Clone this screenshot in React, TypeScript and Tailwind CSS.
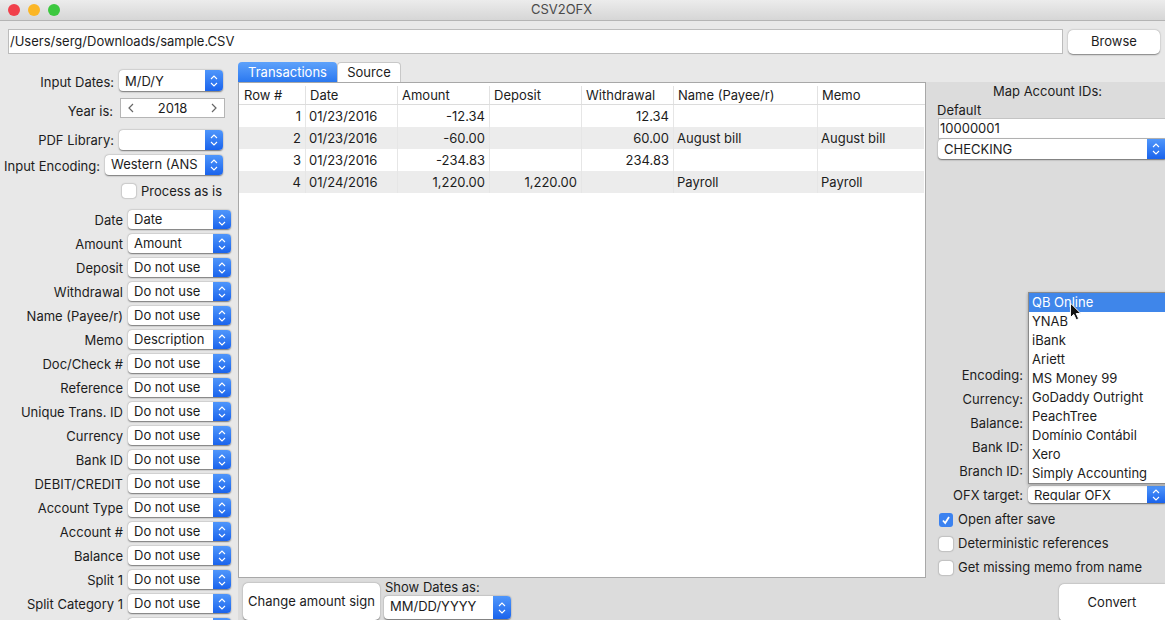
import type { ReactNode } from "react";

const FONT = "font-['Inter','Liberation_Sans',sans-serif]";

function Arrows() {
  return (
    <svg width="8" height="14" viewBox="0 0 8 14" fill="none" stroke="white" strokeWidth="1.1">
      <path d="M1 5 L4 2 L7 5" />
      <path d="M1 9 L4 12 L7 9" />
    </svg>
  );
}

function Select({ value, className }: { value: string; className: string }) {
  return (
    <div className={`flex shrink-0 rounded-[4px] bg-white shadow-[0_0.5px_1.5px_rgba(0,0,0,0.5)] overflow-hidden ${className}`}>
      <div className="min-w-0 flex-1 pl-[6px] h-[15px] mt-[1px] overflow-hidden leading-[17px] whitespace-nowrap">{value}</div>
      <div className="flex w-[18px] shrink-0 items-center justify-center bg-gradient-to-b from-[#4f96fb] to-[#1a63ec]">
        <Arrows />
      </div>
    </div>
  );
}

function Checkbox({ checked }: { checked?: boolean }) {
  return (
    <div className={`flex h-[14px] w-[14px] shrink-0 items-center justify-center rounded-[3px] ${checked ? "bg-[#3b82f0]" : "bg-white shadow-[0_0_1.5px_rgba(0,0,0,0.6)]"}`}>
      {checked && (
        <svg width="10" height="10" viewBox="0 0 10 10" fill="none" stroke="white" strokeWidth="1.8">
          <path d="M2 5.5 L4.2 8 L8 2" />
        </svg>
      )}
    </div>
  );
}

function Button({ children, className }: { children: ReactNode; className: string }) {
  return (
    <div className={`flex shrink-0 items-center justify-center rounded-[5px] bg-white shadow-[0_0.5px_1.5px_rgba(0,0,0,0.45)] ${className}`}>
      {children}
    </div>
  );
}

const mapRows = [
  ["Date", "Date"],
  ["Amount", "Amount"],
  ["Deposit", "Do not use"],
  ["Withdrawal", "Do not use"],
  ["Name (Payee/r)", "Do not use"],
  ["Memo", "Description"],
  ["Doc/Check #", "Do not use"],
  ["Reference", "Do not use"],
  ["Unique Trans. ID", "Do not use"],
  ["Currency", "Do not use"],
  ["Bank ID", "Do not use"],
  ["DEBIT/CREDIT", "Do not use"],
  ["Account Type", "Do not use"],
  ["Account #", "Do not use"],
  ["Balance", "Do not use"],
  ["Split 1", "Do not use"],
  ["Split Category 1", "Do not use"],
  ["", ""],
];

const columns = ["Row #", "Date", "Amount", "Deposit", "Withdrawal", "Name (Payee/r)", "Memo"];
const GRID = "grid grid-cols-[66px_92px_92px_92px_92px_144px_104px]";

const rows = [
  ["1", "01/23/2016", "-12.34", "", "12.34", "", ""],
  ["2", "01/23/2016", "-60.00", "", "60.00", "August bill", "August bill"],
  ["3", "01/23/2016", "-234.83", "", "234.83", "", ""],
  ["4", "01/24/2016", "1,220.00", "1,220.00", "", "Payroll", "Payroll"],
];

const menu = ["QB Online", "YNAB", "iBank", "Ariett", "MS Money 99", "GoDaddy Outright", "PeachTree", "Domínio Contábil", "Xero", "Simply Accounting"];

function TopLabel({ children, className }: { children: ReactNode; className?: string }) {
  return <div className={`text-right whitespace-nowrap ${className ?? ""}`}>{children}</div>;
}

function LeftColumn() {
  return (
    <div className="w-[238px] shrink-0 overflow-hidden">
      <div className="mt-[9px] flex h-[21px] items-center justify-end gap-[5px] pr-[15px]">
        <TopLabel className="pt-[4px]">Input Dates:</TopLabel>
        <Select value="M/D/Y" className="h-[21px] w-[104px] [&>div:first-child]:mt-[3px]" />
      </div>
      <div className="mt-[7px] flex h-[20px] items-center justify-end gap-[7px] pr-[13px]">
        <TopLabel className="pt-[7px]">Year is:</TopLabel>
        <div className="flex h-[20px] w-[105px] items-center justify-between border border-[#b5b5b5] bg-white px-[7px]">
          <svg width="6" height="10" viewBox="0 0 6 10" fill="none" stroke="#666" strokeWidth="1.2"><path d="M5 1 L1 5 L5 9" /></svg>
          <span className="pt-[2px]">2018</span>
          <svg width="6" height="10" viewBox="0 0 6 10" fill="none" stroke="#666" strokeWidth="1.2"><path d="M1 1 L5 5 L1 9" /></svg>
        </div>
      </div>
      <div className="mt-[12px] flex h-[20px] items-center justify-end gap-[5px] pr-[15px]">
        <TopLabel className="pt-[2px]">PDF Library:</TopLabel>
        <Select value="" className="h-[20px] w-[104px]" />
      </div>
      <div className="mt-[5px] flex h-[20px] items-center justify-end gap-[5px] pr-[15px]">
        <TopLabel className="pt-[3px]">Input Encoding:</TopLabel>
        <Select value="Western (ANS" className="h-[20px] w-[118px]" />
      </div>
      <div className="mt-[8px] flex h-[16px] items-center pl-[122px] gap-[5px]">
        <Checkbox />
        <span className="whitespace-nowrap pt-[1px]">Process as is</span>
      </div>
      <div className="mt-[11px] flex flex-col gap-[5px]">
        {mapRows.map(([label, value], i) => (
          <div key={i} className="flex h-[19px] items-center justify-end gap-[5px] pr-[7px]">
            <div className="pt-[2px] text-right whitespace-nowrap">{label}</div>
            <Select value={value} className="h-[19px] w-[103px]" />
          </div>
        ))}
      </div>
    </div>
  );
}

function Table() {
  return (
    <div className="h-[496px] border border-[#a8a8a8] bg-white">
      <div className={`${GRID} h-[22px] items-center border-b border-[#dcdcdc]`}>
        {columns.map((c, i) => (
          <div key={c} className={`mt-[2px] h-[18px] leading-[18px] whitespace-nowrap overflow-hidden ${i > 0 ? "border-l border-[#e2e2e2] pl-[4px]" : "pl-[5px]"}`}>{c}</div>
        ))}
      </div>
      {rows.map((r, i) => (
        <div key={i} className={`${GRID} h-[22px] w-[685px] ${i % 2 === 1 ? "bg-[#ececec]" : ""}`}>
          {r.map((cell, j) => (
            <div key={j} className={`h-[22px] leading-[22px] whitespace-nowrap ${j !== 0 ? "border-l border-[#e6e6e6]" : ""} ${j === 0 || (j >= 2 && j <= 4) ? "pr-[4px] text-right" : "pl-[3px]"}`}>{cell}</div>
          ))}
        </div>
      ))}
    </div>
  );
}

function MiddleColumn() {
  return (
    <div className="flex w-[688px] shrink-0 flex-col">
      <div className="mt-[1px] flex h-[20px] items-end">
        <div className="flex h-[20px] w-[99px] items-center justify-center rounded-t-[4px] bg-gradient-to-b from-[#5ea2fb] to-[#2a78f0] pt-[2px] text-white">Transactions</div>
        <div className="flex h-[20px] w-[64px] items-center justify-center rounded-t-[4px] border border-b-0 border-[#c8c8c8] bg-white pt-[1px]">Source</div>
      </div>
      <Table />
      <div className="flex h-[42px] bg-[#dcdcdc]">
        <Button className="ml-[5px] mt-[5px] h-[37px] w-[137px]">Change amount sign</Button>
        <div className="ml-[4px] w-[127px]">
          <div className="mt-[2px] h-[15px] pl-[1px] leading-[15px] whitespace-nowrap">Show Dates as:</div>
          <Select value="MM/DD/YYYY" className="mt-[1px] h-[23px] w-[127px] [&>div:first-child]:mt-[2px] [&>div:first-child]:h-[18px]" />
        </div>
      </div>
    </div>
  );
}

function RightColumn() {
  const labels = ["Encoding:", "Currency:", "Balance:", "Bank ID:", "Branch ID:"];
  return (
    <div className="relative w-[239px] shrink-0 overflow-hidden">
      <div className="h-[21px]" />
      <div className="h-[538px] bg-[#dcdcdc] pt-[1px]">
        <div className="pl-[4px] text-center leading-[17px]">Map Account IDs:</div>
        <div className="ml-[11px] mt-[3px] leading-[15px]">Default</div>
        <div className="ml-[12px] h-[21px] w-[240px] border border-[#c4c4c4] bg-white pl-[1px] leading-[19px]">10000001</div>
        <Select value="CHECKING" className="ml-[12px] h-[20px] w-[227px] rounded-r-none [&>div:first-child]:mt-[2px]" />

        <div className="mt-[207px] flex flex-col gap-[5px]">
          {labels.map((l) => (
            <div key={l} className="h-[19px] w-[97px] text-right leading-[19px]">{l}</div>
          ))}
          <div className="flex h-[19px] items-start gap-[5px]">
            <div className="w-[97px] shrink-0 text-right leading-[19px]">OFX target:</div>
            <Select value="Regular OFX" className="h-[17px] w-[137px] rounded-r-none [&>div:first-child]:h-[14px]" />
          </div>
        </div>

        <div className="ml-[13px] mt-[8px] flex flex-col gap-[10px]">
          <div className="flex h-[14px] items-center gap-[5px]"><Checkbox checked /><span className="whitespace-nowrap">Open after save</span></div>
          <div className="flex h-[14px] items-center gap-[5px]"><Checkbox /><span className="whitespace-nowrap">Deterministic references</span></div>
          <div className="flex h-[14px] items-center gap-[5px]"><Checkbox /><span className="whitespace-nowrap">Get missing memo from name</span></div>
        </div>
        <Button className="ml-[133px] mt-[9px] h-[37px] w-[106px] rounded-r-none">Convert</Button>
      </div>

      {/* open popup over the OFX target field */}
      <div className="absolute left-[102px] top-[231px] w-[140px] border border-[#8a8a8a] bg-white shadow-[0_1px_3px_rgba(0,0,0,0.3)]">
        {menu.map((m, i) => (
          <div key={m} className={`h-[19px] pl-[3px] leading-[19px] whitespace-nowrap ${i === 0 ? "bg-[#3f86ea] text-white" : ""}`}>{m}</div>
        ))}
      </div>
      <svg className="absolute left-[143px] top-[241px]" width="14" height="20" viewBox="0 0 12 18">
        <path d="M1 1 L1 14 L4 11.2 L6.2 16 L8.4 15 L6.2 10.4 L10.2 10.2 Z" fill="#111" stroke="white" strokeWidth="0.9" />
      </svg>
    </div>
  );
}

export default function App() {
  return (
    <div className={`h-[620px] w-[1165px] overflow-hidden bg-[#e8e8e8] text-[13px] text-[#1c1c1c] ${FONT}`}>
      <div className="relative flex h-[21px] items-center justify-center border-b border-[#b4b4b4] bg-gradient-to-b from-[#ececec] to-[#d6d6d6] pr-[42px] text-[#4a4a4a]">
        <div className="absolute left-[8px] top-[4px] flex gap-[8px]">
          <div className="h-[12px] w-[12px] rounded-full bg-[#f1404b]" />
          <div className="h-[12px] w-[12px] rounded-full bg-[#fbb625]" />
          <div className="h-[12px] w-[12px] rounded-full bg-[#3cc83f]" />
        </div>
        CSV2OFX
      </div>
      <div className="flex h-[40px] items-center gap-[5px] pl-[8px] pt-[1px]">
        <div className="h-[25px] w-[1055px] border border-[#bcbcbc] bg-white pl-[1px] leading-[23px]">/Users/serg/Downloads/sample.CSV</div>
        <Button className="h-[24px] w-[92px]">Browse</Button>
      </div>
      <div className="flex h-[559px]">
        <LeftColumn />
        <MiddleColumn />
        <RightColumn />
      </div>
    </div>
  );
}
